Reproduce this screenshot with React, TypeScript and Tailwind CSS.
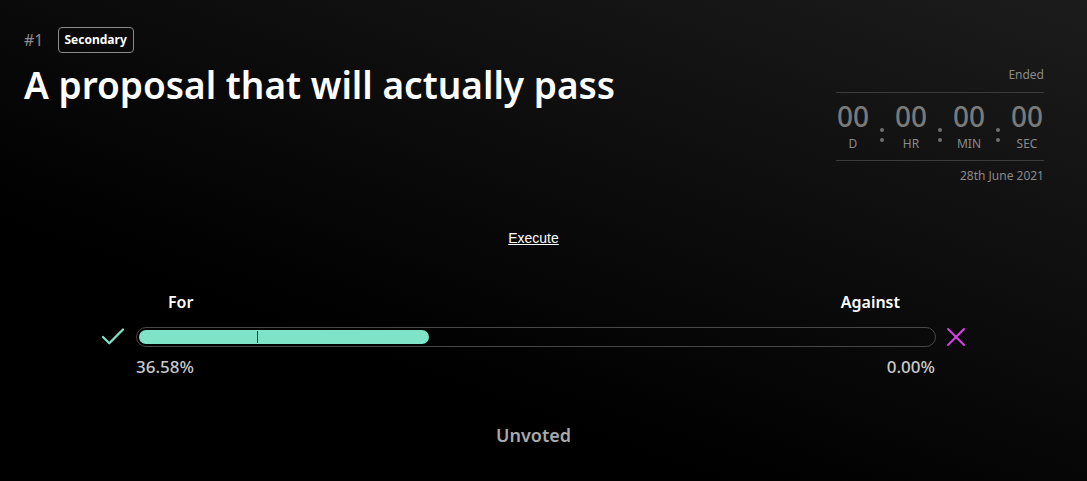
import React from "react";
import { Check, X } from "lucide-react";

const units = [
  { value: "00", label: "D" },
  { value: "00", label: "HR" },
  { value: "00", label: "MIN" },
  { value: "00", label: "SEC" },
];

function Colon() {
  return (
    <div className="flex flex-col gap-[6px] pt-[29px]">
      <span className="block h-[4px] w-[4px] rounded-full bg-[#6f6f6f]" />
      <span className="block h-[4px] w-[4px] rounded-full bg-[#6f6f6f]" />
    </div>
  );
}

function Countdown() {
  return (
    <div className="w-[208px] pt-[67px] text-[#8a8a8a]">
      <div className="text-right text-[12px] leading-[16px]">Ended</div>
      <div className="mt-[9px] border-t border-[#3c3c3c]" />
      <div className="flex justify-between pt-[6px] pb-[8px]">
        {units.map((u, i) => (
          <React.Fragment key={u.label}>
            {i > 0 && <Colon />}
            <div className="flex w-[34px] flex-col items-center">
              <span className="text-[28px] font-medium leading-[34px] text-[#7a7a7a]">{u.value}</span>
              <span className="mt-[3px] text-[12px] leading-[16px]">{u.label}</span>
            </div>
          </React.Fragment>
        ))}
      </div>
      <div className="border-t border-[#3c3c3c]" />
      <div className="mt-[7px] text-right text-[12px] leading-[16px]">28th June 2021</div>
    </div>
  );
}

function VoteBar({ forPct, againstPct }: { forPct: number; againstPct: number }) {
  return (
    <div className="w-[861px]">
      <div className="flex justify-between pl-[65px] pr-[64px] text-[16px] font-semibold leading-[22px] text-white">
        <span>For</span>
        <span>Against</span>
      </div>
      <div className="mt-[8px] flex items-center">
        <Check className="-ml-[5px] mr-[8px] h-[30px] w-[30px] shrink-0 text-[#7fe3c8]" strokeWidth={1.8} />
        <div className="relative h-[20px] w-[800px] shrink-0 rounded-full border border-[#474747] p-[2px]">
          <div className="h-full rounded-full bg-[#7fe3c8]" style={{ width: `${forPct}%` }} />
          <div className="absolute left-[120px] top-[3px] h-[12px] w-[1px] bg-[#1f3b34]" />
        </div>
        <X className="ml-[4px] h-[32px] w-[32px] shrink-0 text-[#d83fe6]" strokeWidth={1.4} />
      </div>
      <div className="mt-[3px] flex justify-between pl-[33px] pr-[29px] text-[17px] font-medium leading-[22px] text-[#c9c9c9]">
        <span>{forPct.toFixed(2)}%</span>
        <span>{againstPct.toFixed(2)}%</span>
      </div>
    </div>
  );
}

export default function App() {
  return (
    <div
      className="relative h-[481px] w-full overflow-hidden bg-[linear-gradient(200deg,#1c1c1c_0%,#0a0a0a_45%,#000_70%)] text-white"
      style={{ fontFamily: '"Noto Sans", "Open Sans", sans-serif' }}
    >
      <div className="flex justify-between pl-[24px] pr-[43px]">
        <div className="pt-[27px]">
          <div className="flex items-center gap-[14px]">
            <span className="text-[16px] text-[#8a8a8a]">#1</span>
            <span className="rounded-[4px] border border-[#8a8a8a] px-[6px] py-[3px] text-[12px] font-bold leading-[18px] text-white">
              Secondary
            </span>
          </div>
          <h1 className="mt-[8px] text-[37px] font-semibold leading-[48px] text-white">
            A proposal that will actually pass
          </h1>
        </div>
        <Countdown />
      </div>

      <div className="ml-[103px] mt-[41px] w-[861px]">
        <div className="text-center">
          <a
            href="#"
            className="text-[14px] leading-[20px] text-white underline"
            style={{ fontFamily: '"Liberation Sans", Arial, sans-serif' }}
          >
            Execute
          </a>
        </div>
        <div className="mt-[42px]">
          <VoteBar forPct={36.58} againstPct={0} />
        </div>
        <div className="mt-[45px] text-center text-[18px] font-semibold leading-[24px] text-[#a9a9a9]">
          Unvoted
        </div>
      </div>
    </div>
  );
}
